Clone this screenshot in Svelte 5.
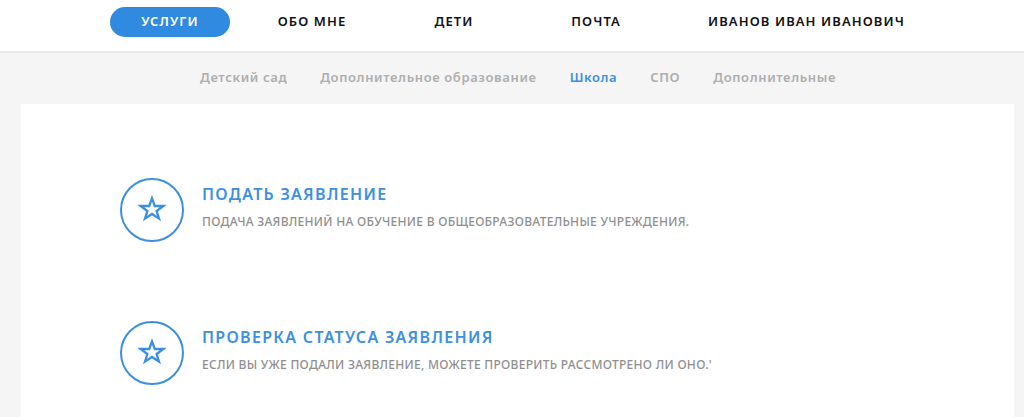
<script>
  const nav = ['УСЛУГИ', 'ОБО МНЕ', 'ДЕТИ', 'ПОЧТА', 'ИВАНОВ ИВАН ИВАНОВИЧ'];
  const tabs = ['Детский сад', 'Дополнительное образование', 'Школа', 'СПО', 'Дополнительные'];
  const items = [
    { title: 'ПОДАТЬ ЗАЯВЛЕНИЕ', text: 'ПОДАЧА ЗАЯВЛЕНИЙ НА ОБУЧЕНИЕ В ОБЩЕОБРАЗОВАТЕЛЬНЫЕ УЧРЕЖДЕНИЯ.' },
    { title: 'ПРОВЕРКА СТАТУСА ЗАЯВЛЕНИЯ', text: "ЕСЛИ ВЫ УЖЕ ПОДАЛИ ЗАЯВЛЕНИЕ, МОЖЕТЕ ПРОВЕРИТЬ РАССМОТРЕНО ЛИ ОНО.'" }
  ];
</script>

<div class="page">
  <header>
    <nav>
      {#each nav as n, i}
        <a class="nav-item" class:active={i === 0}>{n}</a>
      {/each}
    </nav>
  </header>
  <div class="tabs">
    {#each tabs as t, i}
      <a class="tab" class:current={i === 2}>{t}</a>
    {/each}
  </div>
  <main>
    {#each items as it}
      <section class="item">
        <div class="circle">
          <svg width="28" height="28" viewBox="0 0 28 28" fill="none" stroke="#3b8fe0" stroke-width="2.3" stroke-linejoin="miter">
            <path d="M14 3.4 L16.8 11 L25.4 11 L18.6 16 L21 23.6 L14 19 L7 23.6 L9.4 16 L2.6 11 L11.2 11 Z" />
          </svg>
        </div>
        <div class="body">
          <h3>{it.title}</h3>
          <p>{it.text}</p>
        </div>
      </section>
    {/each}
  </main>
</div>

<style>
  :global(body) {
    margin: 0;
    background: #f5f5f5;
    overflow: hidden;
  }
  .page {
    font-family: "Noto Sans", "Open Sans", sans-serif;
    height: 417px;
    overflow: hidden;
  }
  header {
    background: #fff;
    height: 51px;
    border-bottom: 2px solid #e9e9e9;
  }
  nav {
    display: flex;
    gap: 22px;
    padding: 7px 0 0 110px;
  }
  .nav-item {
    box-sizing: border-box;
    min-width: 120px;
    height: 30px;
    line-height: 28px;
    text-align: center;
    font-size: 13px;
    font-weight: 600;
    letter-spacing: 1.1px;
    color: #111;
    border-radius: 15px;
    white-space: nowrap;
  }
  .nav-item:last-child {
    padding: 0 30px;
  }
  .nav-item.active {
    background: #2f8ae0;
    color: #fff;
  }
  .tabs {
    display: flex;
    justify-content: center;
    gap: 33px;
    height: 51px;
    align-items: center;
    box-sizing: border-box;
    padding-bottom: 4px;
    padding-left: 12px;
  }
  .tab {
    font-size: 13px;
    font-weight: 600;
    letter-spacing: 0.62px;
    color: #aeaeae;
    white-space: nowrap;
  }
  .tab.current {
    color: #3d8fe3;
  }
  main {
    background: #fff;
    margin: 0 10px 0 21px;
    padding: 74px 0 0 99px;
    height: 400px;
    display: flex;
    flex-direction: column;
    gap: 79px;
  }
  .item {
    display: flex;
    align-items: center;
    gap: 18px;
  }
  .circle {
    box-sizing: border-box;
    width: 64px;
    height: 64px;
    border: 2px solid #3b8fe0;
    border-radius: 50%;
    display: flex;
    align-items: center;
    justify-content: center;
  }
  .circle svg {
    margin-bottom: 2px;
  }
  .body {
    padding-bottom: 8px;
  }
  h3 {
    margin: 0;
    font-size: 16px;
    font-weight: 600;
    letter-spacing: 1.3px;
    line-height: 22px;
    color: #3d8fe3;
  }
  p {
    margin: 9px 0 0;
    font-size: 12px;
    font-weight: 500;
    letter-spacing: 0.28px;
    line-height: 16px;
    color: #8f8f8f;
  }
</style>
